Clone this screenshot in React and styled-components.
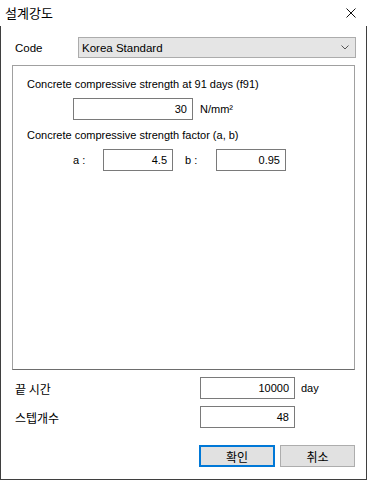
import React from "react";
import styled, { createGlobalStyle } from "styled-components";

const GlobalStyle = createGlobalStyle`
  html, body {
    margin: 0;
    padding: 0;
    background: #ffffff;
  }
  * {
    box-sizing: border-box;
  }
`;

const latin = `"Liberation Sans", "Noto Sans CJK KR", sans-serif`;
const korean = `"Noto Sans CJK KR", "Liberation Sans", sans-serif`;

const Window = styled.div`
  width: 367px;
  height: 480px;
  display: flex;
  flex-direction: column;
  background: #ffffff;
  font-family: ${latin};
  font-size: 11px;
  color: #000;
`;

const TitleBar = styled.div`
  height: 26px;
  display: flex;
  align-items: center;
  justify-content: space-between;
  padding: 0 11px 0 5px;
`;

const Title = styled.span`
  font-family: ${korean};
  font-size: 13px;
  line-height: 16px;
`;

const Body = styled.div`
  flex: 1;
  display: flex;
  flex-direction: column;
  padding: 11px 11px 12px 11px;
  border: 1px solid #3f3f3f;
  border-top: none;
`;

const CodeRow = styled.div`
  display: flex;
  align-items: center;
  padding-left: 3px;
  height: 21px;
  font-size: 11.5px;
`;

const CodeLabel = styled.span`
  width: 63px;
`;

const Combo = styled.div`
  flex: 1;
  height: 21px;
  margin-right: -1px;
  display: flex;
  align-items: center;
  justify-content: space-between;
  padding: 0 6px 0 3px;
  background: #e5e5e5;
  border: 1px solid #acacac;
`;

const Group = styled.div`
  flex: 1;
  margin: 7px 0;
  padding: 10px 14px;
  border: 1px solid #a0a0a0;
  border-bottom-color: #6d6d6d;
  display: flex;
  flex-direction: column;
`;

const Caption = styled.div`
  line-height: 16px;
  height: 16px;
`;

const FieldRow = styled.div`
  display: flex;
  align-items: center;
  margin-top: ${(p) => p.$top || 0}px;
  margin-bottom: ${(p) => p.$bottom || 0}px;
  padding-left: ${(p) => p.$indent || 0}px;
`;

const NumBox = styled.div`
  width: ${(p) => p.$w}px;
  height: 22px;
  border: 1px solid #7a7a7a;
  background: #fff;
  text-align: right;
  padding-right: 5px;
  line-height: 20px;
`;

const Unit = styled.span`
  margin-left: ${(p) => p.$gap || 7}px;
`;

const SmallLabel = styled.span`
  width: ${(p) => p.$w}px;
  padding-left: ${(p) => p.$pad || 0}px;
`;

const BottomRow = styled.div`
  display: flex;
  align-items: center;
  height: 22px;
  padding-left: 3px;
  margin-bottom: 7px;
`;

const KrLabel = styled.span`
  font-family: ${korean};
  font-size: 12px;
  width: 185px;
`;

const ButtonRow = styled.div`
  display: flex;
  justify-content: flex-end;
  gap: 5px;
  margin-top: 10px;
`;

const Button = styled.div`
  width: ${(p) => (p.$primary ? 76 : 75)}px;
  height: 22px;
  display: flex;
  align-items: center;
  justify-content: center;
  background: #e1e1e1;
  border: ${(p) => (p.$primary ? "2px solid #0078d7" : "1px solid #adadad")};
  font-family: ${korean};
  font-size: 12px;
`;

export default function App() {
  return (
    <>
      <GlobalStyle />
      <Window>
        <TitleBar>
          <Title>설계강도</Title>
          <svg width="10" height="10" viewBox="0 0 10 10">
            <path d="M0.5 0.5 L9.5 9.5 M9.5 0.5 L0.5 9.5" stroke="#111" strokeWidth="1" />
          </svg>
        </TitleBar>
        <Body>
          <CodeRow>
            <CodeLabel>Code</CodeLabel>
            <Combo>
              <span>Korea Standard</span>
              <svg width="8" height="5" viewBox="0 0 8 5">
                <path d="M0.5 0.5 L4 4 L7.5 0.5" stroke="#555" strokeWidth="1" fill="none" />
              </svg>
            </Combo>
          </CodeRow>
          <Group>
            <Caption>Concrete compressive strength at 91 days (f91)</Caption>
            <FieldRow $top={6} $bottom={7} $indent={46}>
              <NumBox $w={120}>30</NumBox>
              <Unit>N/mm²</Unit>
            </FieldRow>
            <Caption>Concrete compressive strength factor (a, b)</Caption>
            <FieldRow $top={6} $indent={46}>
              <SmallLabel $w={30}>a :</SmallLabel>
              <NumBox $w={70}>4.5</NumBox>
              <SmallLabel $w={43} $pad={12}>b :</SmallLabel>
              <NumBox $w={70}>0.95</NumBox>
            </FieldRow>
          </Group>
          <BottomRow>
            <KrLabel>끝 시간</KrLabel>
            <NumBox $w={95}>10000</NumBox>
            <Unit $gap={6}>day</Unit>
          </BottomRow>
          <BottomRow>
            <KrLabel>스텝개수</KrLabel>
            <NumBox $w={95}>48</NumBox>
          </BottomRow>
          <ButtonRow>
            <Button $primary>확인</Button>
            <Button>취소</Button>
          </ButtonRow>
        </Body>
      </Window>
    </>
  );
}
